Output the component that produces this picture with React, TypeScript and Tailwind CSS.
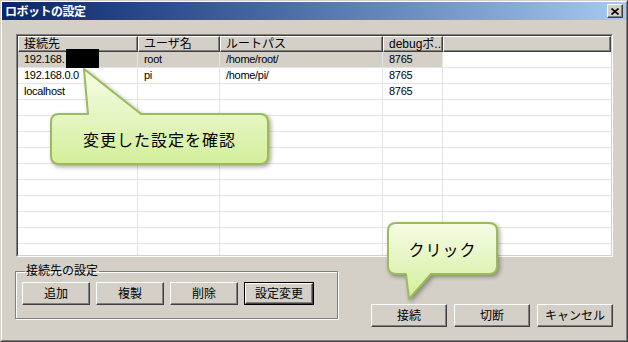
import React from "react";

const headers = ["接続先", "ユーザ名", "ルートパス", "debugポ..."];
const colW = ["w-[120px]", "w-[82px]", "w-[163px]", "w-[60px]"];

const rows = [
  ["192.168.", "root", "/home/root/", "8765"],
  ["192.168.0.0", "pi", "/home/pi/", "8765"],
  ["localhost", "", "", "8765"],
];

function WinButton(props: any) {
  const { label, className = "", isDefault } = props;
  const inner = (
    <div className="h-full w-full flex items-center justify-center bg-[#d4d0c8] border border-t-white border-l-white border-r-[#404040] border-b-[#404040] shadow-[inset_-1px_-1px_0_#808080]">
      {label}
    </div>
  );
  if (isDefault) {
    return <div className={`border border-black ${className}`}>{inner}</div>;
  }
  return <div className={className}>{inner}</div>;
}

function Callout(props: any) {
  const { className, w, h, d, id } = props;
  return (
    <svg
      className={`absolute drop-shadow-[2px_2px_2px_rgba(0,0,0,0.35)] ${className}`}
      width={w}
      height={h}
      viewBox={`0 0 ${w} ${h}`}
    >
      <defs>
        <linearGradient id={id} x1="0" y1="0" x2="0" y2="1">
          <stop offset="0" stopColor="#f6fce6" />
          <stop offset="1" stopColor="#d3ef9b" />
        </linearGradient>
      </defs>
      <path d={d} fill={`url(#${id})`} stroke="#9bbb59" strokeWidth="2" strokeLinejoin="round" />
    </svg>
  );
}

export default function App() {
  return (
    <div className="relative w-[628px] h-[342px] overflow-hidden bg-[#d4d0c8] text-[12px] text-black font-['Liberation_Sans','Noto_Sans_CJK_JP',sans-serif] border border-t-[#d4d0c8] border-l-[#d4d0c8] border-r-[#404040] border-b-[#404040]">
      <div className="h-full flex flex-col border border-t-white border-l-white border-r-[#808080] border-b-[#808080]">
        {/* title bar */}
        <div className="h-[18px] flex items-center justify-between bg-gradient-to-r from-[#0a246a] to-[#a6caf0]">
          <span className="pl-[3px] text-white font-bold text-[12px] tracking-[-0.5px] font-['Noto_Sans_CJK_JP',sans-serif] leading-none">
            ロボットの設定
          </span>
          <div className="mr-[3px] w-[16px] h-[14px] flex items-center justify-center bg-[#d4d0c8] border border-t-white border-l-white border-r-[#404040] border-b-[#404040] shadow-[inset_-1px_-1px_0_#808080]">
            <svg width="8" height="7" viewBox="0 0 8 7">
              <path d="M0.5 0.5 L7.5 6.5 M7.5 0.5 L0.5 6.5" stroke="#000" strokeWidth="1.6" />
            </svg>
          </div>
        </div>

        {/* list view */}
        <div className="mt-[14px] ml-[14px] w-[597px] h-[223px] border border-t-[#808080] border-l-[#808080] border-r-white border-b-white">
          <div className="h-full overflow-hidden bg-white border border-t-[#404040] border-l-[#404040] border-r-[#d4d0c8] border-b-[#d4d0c8]">
            <div className="flex h-[16px] bg-[#d4d0c8]">
              {headers.map((h, i) => (
                <div
                  key={h}
                  className={`${colW[i]} h-full flex items-center pl-[5px] whitespace-nowrap overflow-hidden border border-t-white border-l-white border-r-[#404040] border-b-[#404040] shadow-[inset_-1px_-1px_0_#808080]`}
                >
                  {h}
                </div>
              ))}
              <div className="flex-1 h-full border border-t-white border-l-white border-r-[#404040] border-b-[#404040] shadow-[inset_-1px_-1px_0_#808080]" />
            </div>
            {Array.from({ length: 13 }, (_, r) => {
              const row = rows[r] || ["", "", "", ""];
              const sel = r === 0;
              return (
                <div key={r} className="flex h-[16px] text-[11px] tracking-[-0.3px]">
                  {row.map((c, i) => (
                    <div
                      key={i}
                      className={`${colW[i]} h-full flex items-center pl-[6px] whitespace-nowrap overflow-hidden border-b border-r border-[#e4e4e4] ${sel ? "bg-[#d4d0c8]" : ""}`}
                    >
                      {c}
                    </div>
                  ))}
                  <div className="flex-1 h-full border-b border-[#e4e4e4]" />
                </div>
              );
            })}
          </div>
        </div>

        {/* bottom controls */}
        <div className="mt-[8px] ml-[13px] w-[598px] flex justify-between items-start">
          <fieldset className="w-[323px] h-[54px] border border-[#808080] shadow-[inset_1px_1px_0_#fff,1px_1px_0_#fff] px-[6px]">
            <legend className="ml-[3px] px-[1px] leading-[12px]">接続先の設定</legend>
            <div className="flex gap-[6px] mt-[5px]">
              <WinButton label="追加" className="w-[68px] h-[23px]" />
              <WinButton label="複製" className="w-[68px] h-[23px]" />
              <WinButton label="削除" className="w-[68px] h-[23px]" />
              <WinButton label="設定変更" className="w-[70px] h-[23px]" isDefault />
            </div>
          </fieldset>
          <div className="mt-[39px] flex gap-[7px]">
            <WinButton label="接続" className="w-[76px] h-[23px]" />
            <WinButton label="切断" className="w-[76px] h-[23px]" />
            <WinButton label="キャンセル" className="w-[76px] h-[23px]" />
          </div>
        </div>
      </div>

      {/* redaction */}
      <div className="absolute left-[65px] top-[48px] w-[33px] h-[19px] bg-black" />

      {/* callout 1 */}
      <Callout
        id="g1"
        className="left-[48px] top-[66px]"
        w={224}
        h={104}
        d="M10 47 L39 47 L35 2 L92 47 L211 47 Q219 47 219 55 L219 89 Q219 97 211 97 L10 97 Q2 97 2 89 L2 55 Q2 47 10 47 Z"
      />
      <div className="absolute left-[50px] top-[113px] w-[217px] h-[50px] flex items-center justify-center text-[16px] tracking-[1px] font-['Noto_Sans_CJK_JP',sans-serif]">
        変更した設定を確認
      </div>

      {/* callout 2 */}
      <Callout
        id="g2"
        className="left-[384px] top-[219px]"
        w={118}
        h={84}
        d="M11 3 L104 3 Q112 3 112 11 L112 46 Q112 54 104 54 L46 54 L24 79 L21 54 L11 54 Q3 54 3 46 L3 11 Q3 3 11 3 Z"
      />
      <div className="absolute left-[387px] top-[222px] w-[109px] h-[51px] flex items-center justify-center text-[16px] tracking-[1px] font-['Noto_Sans_CJK_JP',sans-serif]">
        クリック
      </div>
    </div>
  );
}
